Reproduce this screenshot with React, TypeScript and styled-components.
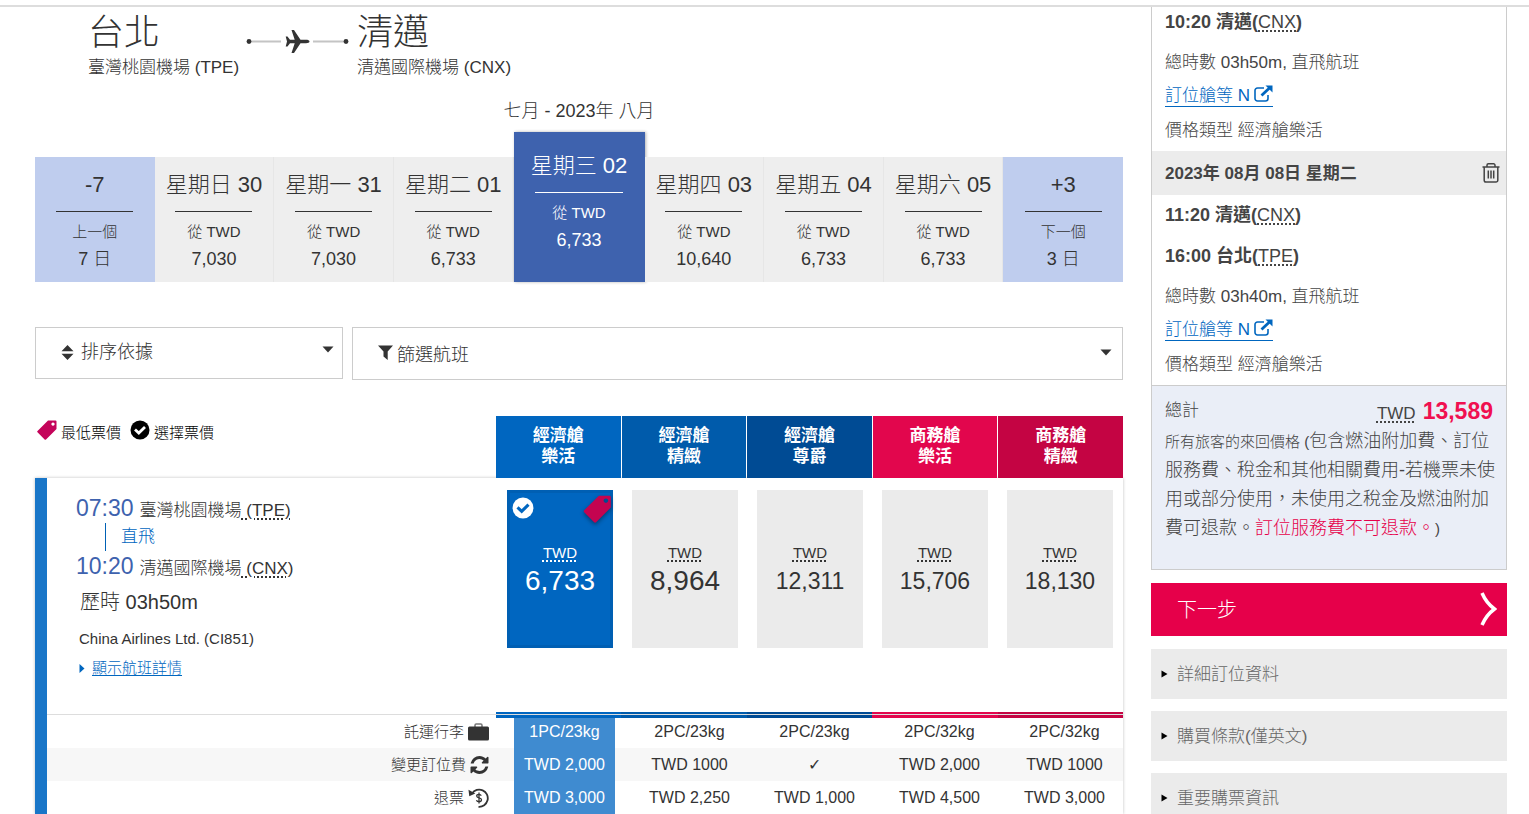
import React from 'react';
import styled, { createGlobalStyle } from 'styled-components';

const GlobalStyle = createGlobalStyle`
  *, *::before, *::after { box-sizing: border-box; }
  body {
    margin: 0;
    background: #fff;
    color: #333;
    font-family: "Liberation Sans", "Noto Sans CJK TC", sans-serif;
    font-size: 17px;
    font-weight: 300;
  }
  button, select { font: inherit; color: inherit; border-radius: 0; cursor: pointer; }
  h1, h2, p { margin: 0; font: inherit; }
  abbr { text-decoration: underline dotted 2px; text-underline-offset: 2px; }
`;

const Page = styled.div`
  height: 100vh;
  overflow: hidden;
  padding-top: 5px;
`;

const Columns = styled.div`
  display: grid;
  grid-template-columns: minmax(0, 1fr) 356px;
  gap: 28px;
  padding: 0 22px 0 35px;
  border-top: 2px solid #ddd;
`;

const Route = styled.header`
  display: flex;
  padding: 4px 0 0 53px;
`;

const City = styled.h1`
  font-size: 36px;
  line-height: 44px;
`;

const Airport = styled.p`
  font-size: 17px;
  line-height: 26px;
`;

const RouteLine = styled.svg`
  flex: none;
  margin: 15px 7px 0;
`;

const Month = styled.p`
  margin-top: 17px;
  line-height: 26px;
  font-size: 18px;
  text-align: center;
`;

const Days = styled.div`
  display: grid;
  grid-template-columns: repeat(4, minmax(0, 1fr)) 131px repeat(4, minmax(0, 1fr));
  align-items: end;
  padding-top: 8px;
`;

type DayKind = 'day' | 'jump' | 'selected';

const dayColors: Record<DayKind, string> = {
  day: '#eee',
  jump: '#bfcdee',
  selected: '#3e62ae',
};

const DayButton = styled.button<{ $kind: DayKind }>`
  display: flex;
  flex-direction: column;
  align-items: center;
  height: ${(p) => (p.$kind === 'selected' ? 150 : 125)}px;
  padding: ${(p) => (p.$kind === 'selected' ? 18 : 12)}px 0 0;
  border: 0;
  border-right: ${(p) => (p.$kind === 'day' ? '1px solid #e6e6e6' : '0')};
  background: ${(p) => dayColors[p.$kind]};
  color: ${(p) => (p.$kind === 'selected' ? '#fff' : '#333')};
  box-shadow: ${(p) => (p.$kind === 'selected' ? '1px 0 3px rgba(0, 0, 0, 0.3)' : 'none')};
  white-space: nowrap;
`;

const DayName = styled.span`
  font-size: 22px;
  line-height: 32px;
`;

const DayRule = styled.span<{ $wide?: boolean }>`
  width: ${(p) => (p.$wide ? 88 : 77)}px;
  height: 1px;
  margin: 10px 0 8px;
  background: currentColor;
`;

const DayNote = styled.span`
  font-size: 15px;
  line-height: 24px;
`;

const DayPrice = styled.span`
  font-size: 18px;
  line-height: 30px;
`;

const Controls = styled.div`
  display: grid;
  grid-template-columns: 308px minmax(0, 1fr);
  gap: 9px;
  margin-top: 45px;
`;

const SortBox = styled.label`
  display: grid;
  height: 52px;
  border: 1px solid #ccc;
  align-items: center;

  & > * { grid-area: 1 / 1; }
  & > svg { margin: 0 0 2px 25px; pointer-events: none; z-index: 1; }
  & > svg:last-child { justify-self: end; margin: 0 8px 8px 0; }
`;

const SortSelect = styled.select`
  appearance: none;
  height: 50px;
  padding: 0 30px 2px 45px;
  border: 0;
  background: transparent;
  font-size: 18px;
`;

const FilterButton = styled.button`
  display: flex;
  align-items: center;
  gap: 4px;
  height: 53px;
  padding: 0 10px 2px 25px;
  border: 1px solid #ccc;
  background: #fff;
  font-size: 18px;

  & > svg:last-child { margin-left: auto; }
`;

const FareHead = styled.div`
  display: grid;
  grid-template-columns: minmax(0, 1fr) 627px;
  margin-top: 36px;
`;

const Legend = styled.div`
  display: flex;
  align-items: flex-start;
  gap: 4px;
  padding: 4px 0 0 2px;
  color: #000;
  font-size: 15px;
  line-height: 26px;
`;

const LegendText = styled.span`
  margin-right: 5px;
`;

const Cabins = styled.div`
  display: grid;
  grid-template-columns: repeat(5, minmax(0, 1fr));
  gap: 1px;
`;

const Cabin = styled.h2<{ $color: string }>`
  display: flex;
  flex-direction: column;
  justify-content: center;
  height: 62px;
  padding-bottom: 3px;
  background: ${(p) => p.$color};
  color: #fff;
  font-size: 17px;
  font-weight: 700;
  line-height: 21px;
  text-align: center;
`;

const Card = styled.section`
  border-left: 12px solid #1976c8;
  box-shadow: 0 0 3px rgba(0, 0, 0, 0.25);
`;

const Flight = styled.div`
  display: grid;
  grid-template-columns: minmax(0, 1fr) 625px;
  height: 234px;
`;

const Details = styled.div`
  padding: 15px 0 0 29px;
`;

const Stop = styled.div`
  display: flex;
  align-items: baseline;
  gap: 6px;
  height: 30px;
  line-height: 30px;
  font-size: 17px;
`;

const Time = styled.span`
  color: #3e62ae;
  font-size: 23px;
`;

const Direct = styled.div`
  height: 28px;
  margin-left: 29px;
  padding-left: 15px;
  border-left: 1px solid #0061b5;
  color: #0066bf;
  font-size: 17px;
  line-height: 28px;
`;

const Duration = styled.p`
  margin: 6px 0 0 4px;
  font-size: 20px;
  line-height: 30px;
`;

const Carrier = styled.p`
  margin: 10px 0 0 3px;
  font-size: 15px;
  line-height: 24px;
`;

const MoreLink = styled.a`
  display: inline-flex;
  align-items: center;
  gap: 7px;
  margin: 5px 0 0 3px;
  color: #0066bf;
  font-size: 15px;
  line-height: 24px;
  text-underline-offset: 2px;
`;

const Fares = styled.div`
  display: grid;
  grid-template-columns: repeat(5, 106px);
  justify-content: space-between;
  padding: 12px 10px 0 9px;
`;

const Fare = styled.button<{ $selected: boolean }>`
  position: relative;
  display: flex;
  flex-direction: column;
  align-items: center;
  height: 158px;
  padding: 53px 0 0;
  border: 0;
  background: ${(p) => (p.$selected ? '#0066c0' : '#ebebeb')};
  color: ${(p) => (p.$selected ? '#fff' : '#333')};
  box-shadow: ${(p) => (p.$selected ? 'inset 0 0 0 3px #005fb3' : 'none')};
`;

const FareCurrency = styled.abbr`
  height: 18px;
  font-size: 15px;
  line-height: 20px;
`;

const FareAmount = styled.span<{ $large: boolean }>`
  font-size: ${(p) => (p.$large ? 28 : 23)}px;
  line-height: 40px;
`;

const CheckBadge = styled.svg`
  position: absolute;
  top: 7px;
  left: 5px;
`;

const TagBadge = styled.svg`
  position: absolute;
  top: 5px;
  right: 1px;
  filter: drop-shadow(0 2px 2px rgba(0, 0, 0, 0.4));
`;

const Stripes = styled.div`
  display: grid;
  grid-template-columns: minmax(0, 1fr) 627px;
`;

const CabinStripes = styled.div`
  display: grid;
  grid-template-columns: repeat(5, minmax(0, 1fr));
`;

const Stripe = styled.span<{ $color?: string }>`
  height: 6px;
  border-top: 2px solid ${(p) => p.$color ?? 'transparent'};
  border-bottom: 3px solid ${(p) => p.$color ?? 'transparent'};
  background: #ddd content-box;
`;

const Rules = styled.table`
  width: 100%;
  margin-top: -3px;
  border-collapse: collapse;
  table-layout: fixed;
  font-size: 16px;

  tr { height: 33px; }
  tr:nth-child(even) { background: #f7f7f7; }
  td { width: 125px; padding: 0 8px 0 16px; }
`;

const RuleLabel = styled.th`
  padding: 0 9px 0 0;
  font-size: 15px;
  font-weight: 300;
  line-height: 20px;

  & > span {
    display: flex;
    align-items: center;
    justify-content: flex-end;
    gap: 4px;
  }
`;

const RuleValue = styled.span<{ $selected: boolean }>`
  display: block;
  height: 33px;
  line-height: 33px;
  text-align: center;
  white-space: nowrap;
  font-family: "Liberation Sans", "DejaVu Sans", sans-serif;
  background: ${(p) => (p.$selected ? '#3f8bd0' : 'transparent')};
  color: ${(p) => (p.$selected ? '#fff' : '#333')};
`;

const Sidebar = styled.aside`
  overflow: hidden;
  color: #444;
`;

const Summary = styled.section`
  margin-top: -5px;
  border: 1px solid #ccc;
  border-top: 0;
`;

const Airports = styled.p`
  height: 41px;
  padding-left: 13px;
  font-size: 18px;
  font-weight: 700;
  line-height: 41px;

  abbr { font-weight: 300; }
`;

const TripInfo = styled.div`
  padding: 2px 13px 3px;
`;

const TripLine = styled.p`
  font-size: 17px;
  line-height: 35px;
`;

const BookingLink = styled.a`
  display: flex;
  gap: 4px;
  width: max-content;
  height: 22px;
  margin: 5px 0 6px;
  border-bottom: 1px solid #0066bf;
  color: #0066bf;
  font-size: 17px;
  line-height: 22px;
  text-decoration: none;
`;

const DateBar = styled.div`
  display: flex;
  align-items: center;
  justify-content: space-between;
  height: 44px;
  padding: 0 6px 4px 13px;
  background: #ececec;
  font-size: 17px;
  font-weight: 700;
`;

const IconButton = styled.button`
  display: flex;
  padding: 4px 0 0;
  border: 0;
  background: none;
`;

const Total = styled.div`
  height: 184px;
  padding: 9px 11px 0 13px;
  border-top: 1px solid #ccc;
  background: #eaeef7;
`;

const TotalRow = styled.div`
  display: flex;
  justify-content: space-between;
  height: 32px;
  padding-right: 2px;
  line-height: 32px;
`;

const TotalPrice = styled.span`
  display: flex;
  align-items: baseline;
  gap: 7px;

  strong { color: #f01050; font-size: 23px; font-weight: 700; }
`;

const TotalNote = styled.p`
  font-size: 18px;
  line-height: 29px;

  small { font-size: 15px; }
  em { color: #e6004a; font-style: normal; }
`;

const NextButton = styled.button`
  display: flex;
  align-items: center;
  justify-content: space-between;
  width: 100%;
  height: 53px;
  margin-top: 13px;
  padding: 0 10px 2px 26px;
  border: 0;
  background: #e6004a;
  color: #fff;
  font-size: 20px;
`;

const Accordion = styled.button`
  display: flex;
  align-items: center;
  gap: 9px;
  width: 100%;
  height: 50px;
  margin-top: 13px;
  padding: 0 10px 3px;
  border: 0;
  background: #ebebeb;
  color: #666;
  font-size: 17px;

  & > svg { margin-top: 3px; }
  & + & { margin-top: 12px; }
`;

const Caret = () => (
  <svg width="12" height="7" viewBox="0 0 12 7" aria-hidden="true">
    <path d="M0.5 0.5h11L6 6.5z" fill="#333" />
  </svg>
);

const tagPath = 'M11 0.5h7.500a1 1 0 0 1 1 1v7.500L9 19.500a1 1 0 0 1-1.400 0L0.500 12.300a1 1 0 0 1 0-1.400z M16 2.500a1.600 1.600 0 1 0 0.010 0z';

const TrashIcon = () => (
  <svg width="18" height="20" viewBox="0 0 18 20" fill="none" stroke="#444" strokeWidth="1.500" aria-hidden="true">
    <path d="M0.500 4h17M5 3.800V2.200A1.400 1.400 0 0 1 6.400 0.800h5.200A1.400 1.400 0 0 1 13 2.200v1.600M2.200 4v13.200a1.800 1.800 0 0 0 1.800 1.800h10a1.800 1.800 0 0 0 1.800-1.800V4M6.300 7.500v8M9 7.500v8M11.700 7.500v8" />
  </svg>
);

const ExternalIcon = () => (
  <svg width="19" height="18" viewBox="0 0 19 18" fill="none" stroke="#0066bf" aria-hidden="true">
    <path d="M10 3H3.500A2.500 2.500 0 0 0 1 5.500v8A2.500 2.500 0 0 0 3.500 16h8a2.500 2.500 0 0 0 2.500-2.500V10" strokeWidth="1.600" />
    <path d="M7.500 10.500L15.500 3" strokeWidth="2.800" />
    <path d="M11.500 0.500H18.500V7.500z" fill="#0066bf" stroke="none" />
  </svg>
);

const BagIcon = () => (
  <svg width="21" height="18" viewBox="0 0 21 18" aria-hidden="true">
    <path d="M7 4V2.200A1.200 1.200 0 0 1 8.200 1h4.600A1.200 1.200 0 0 1 14 2.200V4" fill="none" stroke="#777" strokeWidth="1.500" />
    <rect y="3.500" width="21" height="14" rx="1.500" fill="#333" />
  </svg>
);

const RefreshIcon = () => (
  <svg width="19" height="18" viewBox="0 0 1536 1536" aria-hidden="true">
    <path
      fill="#333"
      d="M1511 928q0 5-1 7-64 268-268 434.500T764 1536q-146 0-282.500-55T238 1324l-129 129q-19 19-45 19t-45-19-19-45V960q0-26 19-45t45-19h448q26 0 45 19t19 45-19 45l-137 137q71 66 161 102t187 36q134 0 250-65t186-179q11-17 53-117 8-23 30-23h192q13 0 22.500 9.500t9.500 22.500zm25-800v448q0 26-19 45t-45 19h-448q-26 0-45-19t-19-45 19-45l138-138Q969 256 768 256q-134 0-250 65T332 500q-11 17-53 117-8 23-30 23H50q-13 0-22.500-9.500T18 608v-7q65-268 270-434.500T768 0q146 0 284 55.500T1297 212l130-129q19-19 45-19t45 19 19 45z"
    />
  </svg>
);

const RefundIcon = () => (
  <svg width="21" height="20" viewBox="0 0 21 20" fill="none" stroke="#333" aria-hidden="true">
    <path d="M4 5.500A8.600 8.600 0 1 1 10.500 18.800" strokeWidth="1.800" />
    <path d="M0.500 1.800L1.300 8.300L7.300 5.500z" fill="#333" stroke="none" />
    <path d="M13.300 7.600C12.700 6.600 11.900 6.300 11 6.300C9.600 6.300 8.700 7 8.700 8C8.700 10.600 13.500 9.200 13.500 11.800C13.500 13 12.400 13.700 11 13.700C9.800 13.700 8.900 13.200 8.400 12.200M11 4.600V15.400" strokeWidth="1.300" />
  </svg>
);

const days: { name: string; note: string; price: string; kind: DayKind }[] = [
  { name: '-7', note: '上一個', price: '7 日', kind: 'jump' },
  { name: '星期日 30', note: '從 TWD', price: '7,030', kind: 'day' },
  { name: '星期一 31', note: '從 TWD', price: '7,030', kind: 'day' },
  { name: '星期二 01', note: '從 TWD', price: '6,733', kind: 'day' },
  { name: '星期三 02', note: '從 TWD', price: '6,733', kind: 'selected' },
  { name: '星期四 03', note: '從 TWD', price: '10,640', kind: 'day' },
  { name: '星期五 04', note: '從 TWD', price: '6,733', kind: 'day' },
  { name: '星期六 05', note: '從 TWD', price: '6,733', kind: 'day' },
  { name: '+3', note: '下一個', price: '3 日', kind: 'jump' },
];

const cabins = [
  { cabin: '經濟艙', type: '樂活', color: '#0066c0', price: '6,733' },
  { cabin: '經濟艙', type: '精緻', color: '#005bab', price: '8,964' },
  { cabin: '經濟艙', type: '尊爵', color: '#004b94', price: '12,311' },
  { cabin: '商務艙', type: '樂活', color: '#e2064d', price: '15,706' },
  { cabin: '商務艙', type: '精緻', color: '#c40443', price: '18,130' },
];

const rules = [
  { label: '託運行李', icon: <BagIcon />, values: ['1PC/23kg', '2PC/23kg', '2PC/23kg', '2PC/32kg', '2PC/32kg'] },
  { label: '變更訂位費', icon: <RefreshIcon />, values: ['TWD 2,000', 'TWD 1000', '✓', 'TWD 2,000', 'TWD 1000'] },
  { label: '退票', icon: <RefundIcon />, values: ['TWD 3,000', 'TWD 2,250', 'TWD 1,000', 'TWD 4,500', 'TWD 3,000'] },
];

const Trip = ({ duration }: { duration: string }) => (
  <TripInfo>
    <TripLine>總時數 {duration}, 直飛航班</TripLine>
    <BookingLink href="#booking-class">
      訂位艙等 N
      <ExternalIcon />
    </BookingLink>
    <TripLine>價格類型 經濟艙樂活</TripLine>
  </TripInfo>
);

export default function App() {
  return (
    <Page lang="zh-Hant">
      <GlobalStyle />
      <Columns>
        <main>
          <Route>
            <div>
              <City>台北</City>
              <Airport>臺灣桃園機場 (TPE)</Airport>
            </div>
            <RouteLine width="104" height="30" viewBox="0 0 104 30" aria-hidden="true">
              <path d="M3 15.500H35M67 15.500H99" stroke="#c4c4c4" strokeWidth="2" />
              <circle cx="3" cy="15.500" r="2.400" fill="#333" />
              <circle cx="100" cy="15.500" r="2.400" fill="#333" />
              <path
                fill="#333"
                d="M63.500 15.500C63.500 16.600 62 17.200 60 17.200H54.500L48 27H45.500L48.700 17.200H44L41.500 20.500H39.700L41 15.500L39.700 10.500H41.500L44 13.800H48.700L45.500 4H48L54.500 13.800H60C62 13.800 63.500 14.400 63.500 15.500z"
              />
            </RouteLine>
            <div>
              <City as="p">清邁</City>
              <Airport>清邁國際機場 (CNX)</Airport>
            </div>
          </Route>

          <Month>七月 - 2023年 八月</Month>
          <Days>
            {days.map((d) => (
              <DayButton key={d.name} type="button" $kind={d.kind} aria-pressed={d.kind === 'selected'}>
                <DayName>{d.name}</DayName>
                <DayRule $wide={d.kind === 'selected'} />
                <DayNote>{d.note}</DayNote>
                <DayPrice>{d.price}</DayPrice>
              </DayButton>
            ))}
          </Days>

          <Controls>
            <SortBox>
              <svg width="13" height="15" viewBox="0 0 12 15" aria-hidden="true">
                <path d="M0 6.300L6 0L12 6.300zM0 8.700L6 15L12 8.700z" fill="#333" />
              </svg>
              <SortSelect aria-label="排序依據">
                <option>排序依據</option>
              </SortSelect>
              <Caret />
            </SortBox>
            <FilterButton type="button" aria-expanded="false">
              <svg width="15" height="15" viewBox="0 0 15 15" aria-hidden="true">
                <path d="M0 0.500h15L9.700 6.500V15L5.500 11.500V6.500z" fill="#333" />
              </svg>
              篩選航班
              <Caret />
            </FilterButton>
          </Controls>

          <FareHead>
            <Legend>
              <svg width="20" height="20" viewBox="0 0 20 20" aria-hidden="true">
                <path d={tagPath} fill="#c4045a" fillRule="evenodd" />
              </svg>
              <LegendText>最低票價</LegendText>
              <svg width="20" height="20" viewBox="0 0 20 20" aria-hidden="true">
                <circle cx="10" cy="10" r="9.500" fill="#000" />
                <path d="M5 9.500L8.800 13L15 7" fill="none" stroke="#fff" strokeWidth="2.800" />
              </svg>
              <LegendText>選擇票價</LegendText>
            </Legend>
            <Cabins>
              {cabins.map((c) => (
                <Cabin key={c.color} $color={c.color}>
                  <span>{c.cabin}</span>
                  <span>{c.type}</span>
                </Cabin>
              ))}
            </Cabins>
          </FareHead>

          <Card>
            <Flight>
              <Details>
                <Stop>
                  <Time>07:30</Time>
                  <span>臺灣桃園機場<abbr> (TPE)</abbr></span>
                </Stop>
                <Direct>直飛</Direct>
                <Stop>
                  <Time>10:20</Time>
                  <span>清邁國際機場<abbr> (CNX)</abbr></span>
                </Stop>
                <Duration>歷時 03h50m</Duration>
                <Carrier>China Airlines Ltd. (CI851)</Carrier>
                <MoreLink href="#details">
                  <svg width="6" height="9" viewBox="0 0 6 9" aria-hidden="true">
                    <path d="M0.500 0L5.500 4.500L0.500 9z" fill="#0066bf" />
                  </svg>
                  顯示航班詳情
                </MoreLink>
              </Details>
              <Fares>
                {cabins.map((c, i) => (
                  <Fare key={c.price} type="button" $selected={i === 0} aria-pressed={i === 0}>
                    {i === 0 && (
                      <>
                        <CheckBadge width="22" height="22" viewBox="0 0 20 20" aria-hidden="true">
                          <circle cx="10" cy="10" r="9.500" fill="#fff" />
                          <path d="M5 9.500L8.800 13L15 7" fill="none" stroke="#0066c0" strokeWidth="2.800" />
                        </CheckBadge>
                        <TagBadge width="29" height="28" viewBox="0 0 20 20" aria-hidden="true">
                          <path d={tagPath} fill="#c40450" fillRule="evenodd" />
                        </TagBadge>
                      </>
                    )}
                    <FareCurrency>TWD</FareCurrency>
                    <FareAmount $large={i < 2}>{c.price}</FareAmount>
                  </Fare>
                ))}
              </Fares>
            </Flight>
            <Stripes>
              <Stripe />
              <CabinStripes>
                {cabins.map((c) => (
                  <Stripe key={c.color} $color={c.color} />
                ))}
              </CabinStripes>
            </Stripes>
            <Rules>
              <tbody>
                {rules.map((r) => (
                  <tr key={r.label}>
                    <RuleLabel scope="row">
                      <span>
                        {r.label}
                        {r.icon}
                      </span>
                    </RuleLabel>
                    {r.values.map((v, i) => (
                      <td key={i}>
                        <RuleValue $selected={i === 0}>{v}</RuleValue>
                      </td>
                    ))}
                  </tr>
                ))}
              </tbody>
            </Rules>
          </Card>
        </main>

        <Sidebar>
          <Summary>
            <Airports>10:20 清邁(<abbr>CNX</abbr>)</Airports>
            <Trip duration="03h50m" />
            <DateBar>
              2023年 08月 08日 星期二
              <IconButton type="button" aria-label="刪除">
                <TrashIcon />
              </IconButton>
            </DateBar>
            <Airports>11:20 清邁(<abbr>CNX</abbr>)</Airports>
            <Airports>16:00 台北(<abbr>TPE</abbr>)</Airports>
            <Trip duration="03h40m" />
            <Total>
              <TotalRow>
                <span>總計</span>
                <TotalPrice>
                  <abbr>TWD</abbr>
                  <strong>13,589</strong>
                </TotalPrice>
              </TotalRow>
              <TotalNote>
                <small>所有旅客的來回價格 (</small>
                包含燃油附加費、訂位服務費、稅金和其他相關費用-若機票未使用或部分使用，未使用之稅金及燃油附加費可退款。
                <em>訂位服務費不可退款。</em>
                <small>)</small>
              </TotalNote>
            </Total>
          </Summary>
          <NextButton type="button">
            下一步
            <svg width="17" height="34" viewBox="0 0 17 34" fill="none" stroke="#fff" strokeWidth="3.500" aria-hidden="true">
              <path d="M2 1C5 8 9 13 14.500 17C9 21 5 26 2 33" />
            </svg>
          </NextButton>
          {['詳細訂位資料', '購買條款(僅英文)', '重要購票資訊'].map((t) => (
            <Accordion key={t} type="button" aria-expanded="false">
              <svg width="7" height="8" viewBox="0 0 7 8" aria-hidden="true">
                <path d="M0.500 0.500L6.500 4L0.500 7.500z" fill="#000" />
              </svg>
              {t}
            </Accordion>
          ))}
        </Sidebar>
      </Columns>
    </Page>
  );
}
